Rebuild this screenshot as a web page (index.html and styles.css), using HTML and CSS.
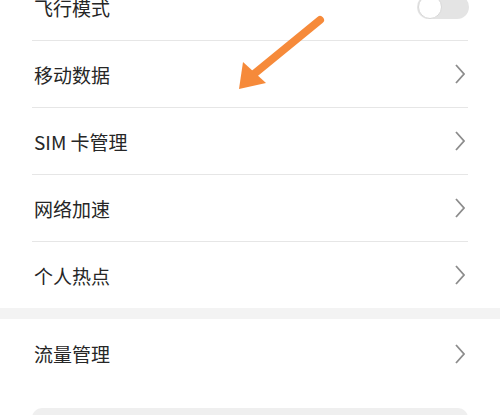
FILE: index.html
```html
<!DOCTYPE html>
<html lang="zh">
<head>
<meta charset="UTF-8">
<title>移动网络</title>
<link rel="stylesheet" href="styles.css">
</head>
<body>
<div class="group first">
  <div class="row">
    <span class="label">飞行模式</span>
    <span class="toggle"><span class="knob"></span></span>
  </div>
  <div class="row">
    <span class="label">移动数据</span>
    <svg class="chevron" width="10" height="20" viewBox="0 0 10 20"><polyline points="1,1 9,10 1,19"/></svg>
  </div>
  <div class="row">
    <span class="label">SIM 卡管理</span>
    <svg class="chevron" width="10" height="20" viewBox="0 0 10 20"><polyline points="1,1 9,10 1,19"/></svg>
  </div>
  <div class="row">
    <span class="label">网络加速</span>
    <svg class="chevron" width="10" height="20" viewBox="0 0 10 20"><polyline points="1,1 9,10 1,19"/></svg>
  </div>
  <div class="row last">
    <span class="label">个人热点</span>
    <svg class="chevron" width="10" height="20" viewBox="0 0 10 20"><polyline points="1,1 9,10 1,19"/></svg>
  </div>
</div>
<div class="band"></div>
<div class="group">
  <div class="row last tall">
    <span class="label">流量管理</span>
    <svg class="chevron" width="10" height="20" viewBox="0 0 10 20"><polyline points="1,1 9,10 1,19"/></svg>
  </div>
  <div class="box"></div>
</div>
<svg class="arrow" width="500" height="120" viewBox="0 0 500 120">
  <line x1="320" y1="20" x2="254" y2="74" />
  <polygon points="239,89 243,62 266,83" />
</svg>
</body>
</html>
```

FILE: styles.css
```css
body {
  margin: 0;
  height: 415px;
  background: #fff;
  font-family: "Noto Sans CJK SC", "Noto Sans", sans-serif;
  color: #262626;
  overflow: hidden;
}
.group {
  padding: 0 32px;
}
.group.first {
  margin-top: -26px;
}
.row {
  display: flex;
  align-items: center;
  justify-content: space-between;
  height: 66px;
  border-bottom: 1px solid #e6e6e6;
  padding-left: 2px;
}
.row.last {
  border-bottom: none;
}
.row.tall {
  height: 69px;
}
.label {
  font-size: 19px;
}
.chevron {
  margin-right: 3px;
}
.chevron polyline {
  fill: none;
  stroke: #8c8c8c;
  stroke-width: 1.8;
}
.toggle {
  width: 52px;
  height: 24px;
  border-radius: 12px;
  background: #e4e4e4;
  position: relative;
  margin-right: -1px;
}
.knob {
  position: absolute;
  left: 1px;
  top: 0;
  width: 22px;
  height: 22px;
  border-radius: 50%;
  background: #fff;
  border: 1px solid #d8d8d8;
}
.band {
  height: 11px;
  background: #f3f3f3;
}
.box {
  margin-top: 20px;
  height: 30px;
  border-radius: 10px;
  background: #efefef;
}
.arrow {
  position: absolute;
  left: 0;
  top: 0;
}
.arrow line {
  stroke: #f68a3a;
  stroke-width: 8;
  stroke-linecap: round;
}
.arrow polygon {
  fill: #f68a3a;
}
```
